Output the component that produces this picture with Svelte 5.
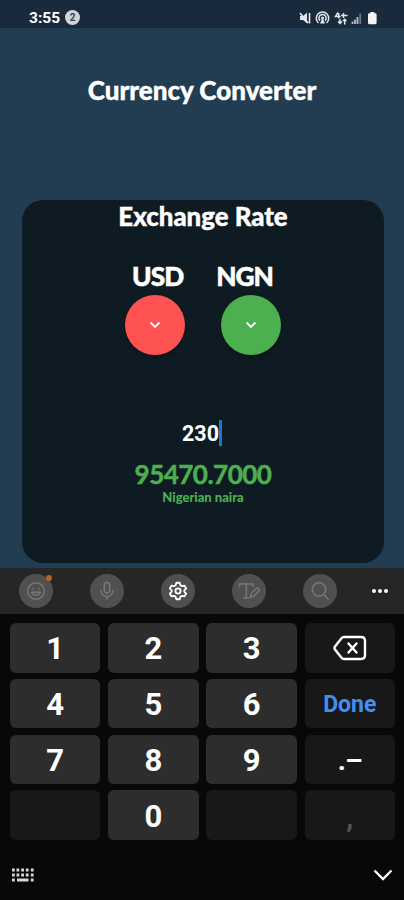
<script lang="ts">
  const keys = [
    { label: "1", kind: "digit" },
    { label: "2", kind: "digit" },
    { label: "3", kind: "digit" },
    { label: "", kind: "delete" },
    { label: "4", kind: "digit" },
    { label: "5", kind: "digit" },
    { label: "6", kind: "digit" },
    { label: "Done", kind: "done" },
    { label: "7", kind: "digit" },
    { label: "8", kind: "digit" },
    { label: "9", kind: "digit" },
    { label: ".–", kind: "symbol" },
    { label: "", kind: "blank" },
    { label: "0", kind: "digit" },
    { label: "", kind: "blank" },
    { label: ",", kind: "comma" }
  ];

  let amount = "230";

  function press(key: { label: string; kind: string }) {
    if (key.kind === "digit") amount += key.label;
    if (key.kind === "delete") amount = amount.slice(0, -1);
  }
</script>

<main>
  <header class="status">
    <span class="clock">3:55</span>
    <span class="count">2</span>
    <svg class="status-icons" viewBox="0 0 80 16" width="80" height="16" fill="none" stroke="#e3e6e8">
      <path d="M1 6h3l4-3.2v10.400L4 10H1z" fill="#e3e6e8" stroke="none" />
      <path d="M10.500 3v10.500M1 3l8 10" stroke-width="1.600" />
      <path d="M19.500 13a6.200 6.200 0 1 1 8 0M21 10.600a3.600 3.600 0 1 1 5 0" stroke-width="1.500" />
      <circle cx="23.500" cy="8" r="1.500" fill="#e3e6e8" stroke="none" />
      <path d="M23.500 8l-2.500 5.500h5z" fill="#e3e6e8" stroke="none" />
      <path d="M39 2.500L36.500 6.500h5M39.700 3v5.500M44.500 3v5M42 5.500h6.500M41 9v5M39 11.500l2 2 2-2M44 11l1.700-1.700 1.700 1.700M45.700 9.500v5" stroke-width="1.500" />
      <path d="M53.500 11.500v2.500M56 9.500v4.500M58.500 7v7" stroke="#b9c0c6" stroke-width="1.800" />
      <path d="M61.200 3.500v10.500" stroke="#6f7a84" stroke-width="1.700" />
      <path d="M69 4.500q0-1.300 1.300-1.300h1V2h4v1.200h1q1.300 0 1.300 1.300v8.200q0 1.500-1.500 1.500h-5.600q-1.500 0-1.500-1.500z" fill="#f2f3f4" stroke="none" />
    </svg>
  </header>

  <h1>Currency Converter</h1>

  <section class="card">
    <h2>Exchange Rate</h2>
    <div class="codes">
      <span>USD</span>
      <span>NGN</span>
    </div>
    <div class="pickers">
      <button class="picker from" type="button" aria-label="Change base currency">
        <svg viewBox="0 0 14 10" width="14" height="10"><path d="M2.500 2.500L7 7l4.500-4.500" /></svg>
      </button>
      <button class="picker to" type="button" aria-label="Change target currency">
        <svg viewBox="0 0 14 10" width="14" height="10"><path d="M2.500 2.500L7 7l4.500-4.500" /></svg>
      </button>
    </div>
    <div class="amount"><span>{amount}</span><i class="caret"></i></div>
    <div class="result">95470.7000</div>
    <div class="currency">Nigerian naira</div>
  </section>

  <section class="keyboard">
    <div class="tools">
      <span class="tool">
        <svg viewBox="0 0 24 24" width="24" height="24">
          <circle cx="12" cy="12" r="8.300" />
          <path d="M9 9v1.500M15 9v1.500M7.700 13.300c1.500 4 7.100 4 8.600 0z" />
        </svg>
        <i class="badge"></i>
      </span>
      <span class="tool">
        <svg viewBox="0 0 24 24" width="24" height="24">
          <rect x="9.300" y="3.500" width="5.400" height="10.500" rx="2.700" />
          <path d="M6 11v.5a6 6 0 0 0 12 0V11M12 17.500v3" />
        </svg>
      </span>
      <span class="tool bright">
        <svg viewBox="0 0 24 24" width="22" height="22">
          <path d="M10.200 3h3.600l.8 2.700 1.700 1 2.800-.6 1.800 3.100-2 2.100v1.400l2 2.100-1.800 3.100-2.800-.6-1.700 1-.8 2.700h-3.600l-.8-2.700-1.700-1-2.800.6-1.800-3.100 2-2.100v-1.400l-2-2.100 1.800-3.100 2.800.6 1.700-1z" />
          <circle cx="12" cy="12" r="2.800" />
        </svg>
      </span>
      <span class="tool">
        <svg viewBox="0 0 24 24" width="24" height="24">
          <path d="M2.500 8V5h13.500v3M9.300 5v14M6.500 19h6M13.500 18.500l.7-4 5-5q1-1 2 0l.6.6q1 1 0 2l-5 5z" />
        </svg>
      </span>
      <span class="tool">
        <svg viewBox="0 0 24 24" width="24" height="24">
          <circle cx="11" cy="10.500" r="6.700" />
          <path d="M16 15.500l4.500 5" />
        </svg>
      </span>
      <svg class="more" viewBox="0 0 18 6" width="18" height="6">
        <circle cx="3" cy="3" r="2" /><circle cx="9" cy="3" r="2" /><circle cx="15" cy="3" r="2" />
      </svg>
    </div>

    <div class="keys">
      {#each keys as key}
        <button type="button" class="key {key.kind}" on:click={() => press(key)}>
          {#if key.kind === "delete"}
            <svg viewBox="0 0 34 26" width="34" height="26">
              <path d="M11 2h17q4 0 4 4v14q0 4-4 4H11q-1.500 0-2.500-1.200L2 14.500q-1-1.500 0-3l6.500-8.300Q9.500 2 11 2z" />
              <path d="M15.500 8.500l8 9M23.500 8.500l-8 9" />
            </svg>
          {:else}
            {key.label}
          {/if}
        </button>
      {/each}
    </div>

    <footer>
      <svg viewBox="0 0 24 14" width="24" height="14">
        <path d="M1 2h2.800M5.500 2h2.800M10.200 2h2.800M14.800 2h2.800M19.800 2h2.800M1 7h2.800M5.500 7h2.800M10.200 7h2.800M14.800 7h2.800M19.800 7h2.800M1 12h2.800M6 12h11.500M19.800 12h2.800" stroke="#d6d6d6" stroke-width="2.800" />
      </svg>
      <svg viewBox="0 0 22 14" width="22" height="14">
        <path d="M2.500 2.500l8.500 8.500 8.500-8.500" fill="none" stroke="#fff" stroke-width="2.300" />
      </svg>
    </footer>
  </section>
</main>

<style>
  :global(body) { margin: 0; background: #080808; }
  main { width: 404px; height: 900px; display: flex; flex-direction: column; overflow: hidden; background: #223c52; color: #fff; font-family: Lato, "Liberation Sans", sans-serif; }
  button { border: 0; padding: 0; font: inherit; color: inherit; }
  svg { display: block; flex: none; }

  .status { box-sizing: border-box; height: 28px; padding: 7px 25px 0 29px; display: flex; align-items: center; background: #1a2a3d; font-family: Roboto, sans-serif; }
  .clock { font-size: 15.500px; font-weight: 700; line-height: 20px; }
  .count { width: 15px; height: 15px; margin-left: 5px; border-radius: 50%; background: #d0d5da; color: #34414f; font-size: 10px; font-weight: 700; line-height: 15px; text-align: center; }
  .status-icons { margin-left: auto; }

  h1, h2 { margin: 0; font-weight: 900; text-align: center; white-space: nowrap; -webkit-text-stroke: 0.4px currentColor; }
  h1 { margin-top: 46px; font-size: 26px; line-height: 32px; }
  .card { box-sizing: border-box; width: 362px; height: 363px; margin: 94px 0 5px 22px; border-radius: 21px; background: #0f1b23; display: flex; flex-direction: column; align-items: center; }
  h2 { font-size: 25.800px; line-height: 32px; }
  .codes { display: flex; gap: 33px; margin: 28px 1px 0 0; font-size: 26.300px; font-weight: 900; line-height: 32px; letter-spacing: -1px; -webkit-text-stroke: 0.5px currentColor; }
  .pickers { display: flex; gap: 36px; margin-top: 3px; }
  .picker { width: 60px; height: 60px; border-radius: 50%; display: grid; place-items: center; box-shadow: 0 2px 4px rgba(0, 0, 0, 0.35); }
  .picker path { fill: none; stroke: #fff; stroke-width: 1.900; }
  .from { background: #ff5252; }
  .to { background: #4caf50; }
  .amount { display: flex; align-items: center; height: 28px; margin: 64px 2px 0 0; font-family: Roboto, sans-serif; font-size: 21.500px; font-weight: 700; }
  .caret { width: 3px; height: 26px; background: #1976d2; }
  .result { margin-top: 13px; color: #4caf50; font-size: 26px; font-weight: 700; line-height: 28px; letter-spacing: -0.500px; -webkit-text-stroke: 0.5px currentColor; }
  .currency { margin-top: 2px; color: #4caf50; font-size: 13px; font-weight: 900; line-height: 14px; }

  .keyboard { flex: 1; display: flex; flex-direction: column; background: #080808; font-family: Roboto, sans-serif; }
  .tools { box-sizing: border-box; height: 46px; padding: 0 0 1px 19px; display: flex; align-items: center; gap: 37.100px; background: #262626; }
  .tool { position: relative; flex: none; width: 34px; height: 34px; border-radius: 50%; background: #505050; display: grid; place-items: center; }
  .tool path, .tool circle, .tool rect { fill: none; stroke: #777; stroke-width: 1.500; stroke-linejoin: round; }
  .bright path, .bright circle { stroke: #fff; stroke-width: 2; }
  .badge { position: absolute; top: 1px; right: 1px; width: 6px; height: 6px; border-radius: 50%; background: #b9602a; }
  .more { margin-left: -3px; fill: #fff; }

  .keys { display: grid; grid-template-columns: repeat(4, 1fr); grid-auto-rows: 49.500px; gap: 6.300px 7.700px; padding: 9px 9px 0 10px; }
  .key { box-sizing: border-box; display: grid; place-items: center; padding-top: 3px; border-radius: 6px; background: #2d2d2d; font-size: 31px; font-weight: 700; line-height: 36px; }
  .delete, .done, .symbol, .blank, .comma { background: #181818; }
  .delete { padding-top: 0; }
  .delete path { fill: none; stroke: #fff; stroke-width: 2.400; stroke-linecap: round; }
  .done { color: #418ef5; font-size: 23px; }
  .symbol { font-size: 28px; letter-spacing: -1px; }
  .comma { padding-top: 6px; color: #555; font-size: 28px; }
  footer { display: flex; justify-content: space-between; align-items: center; margin-top: 28px; padding: 0 10px 0 11px; }
</style>
